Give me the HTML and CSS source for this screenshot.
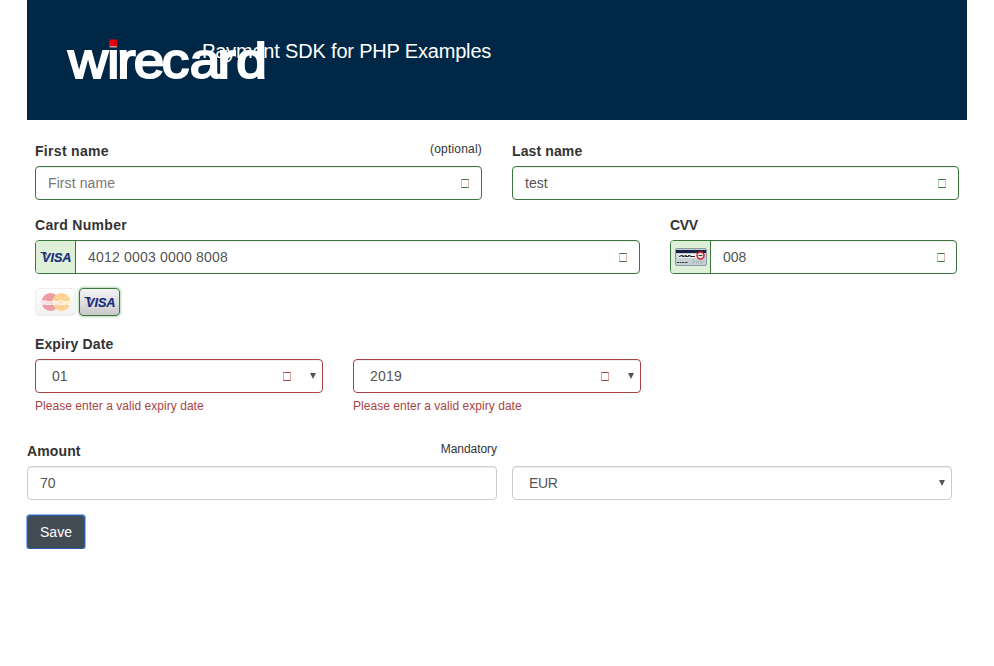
FILE: index.html
```html
<!DOCTYPE html>
<html lang="en">
<head>
<meta charset="utf-8">
<title>Payment SDK for PHP Examples</title>
<link rel="stylesheet" href="styles.css">
</head>
<body>
<main class="container">
  <header class="header">
    <svg class="logo" width="202" height="50" viewBox="0 0 202 50" role="img" aria-label="wirecard">
      <text class="logo-text" transform="scale(1.1 1)" x="2 37.400 46.500 61.500 87 112.500 137.700 154.800" y="42.300">wirecard</text>
      <rect x="43.500" y="3.500" width="8" height="7" fill="#e2000b"/>
    </svg>
    <span class="title">Payment SDK for PHP Examples</span>
  </header>
  <form class="form">
    <div class="payment">
      <div class="row names">
        <div class="group">
          <div class="label-row"><label>First name</label><small class="optional">(optional)</small></div>
          <div class="control valid"><span class="value placeholder">First name</span><i class="mark"></i></div>
        </div>
        <div class="group">
          <div class="label-row"><label class="tight">Last name</label></div>
          <div class="control valid"><span class="value">test</span><i class="mark"></i></div>
        </div>
      </div>
      <div class="row card">
        <div class="group number">
          <div class="label-row"><label>Card Number</label></div>
          <div class="control valid">
            <span class="addon"><svg class="icon" width="32" height="20" viewBox="0 0 32 20"><path d="M0 5h6l2 5-2-3-5-1z" fill="#1b2f70"/><text class="visa" x="2" y="14.500" textLength="29.500" lengthAdjust="spacingAndGlyphs">VISA</text></svg></span>
            <span class="value card-value">4012 0003 0000 8008</span><i class="mark"></i>
          </div>
        </div>
        <div class="group cvv">
          <div class="label-row"><label class="cvv-label">CVV</label></div>
          <div class="control valid">
            <span class="addon"><svg width="32" height="18" viewBox="0 0 32 18"><rect x=".5" y=".5" width="31" height="17" rx="1.500" fill="#c6d0d7" stroke="#8999a5"/><path d="M1 2h30v3H1z" fill="#17203f"/><path d="M3 6h20v4H3z" fill="#f4f4f4"/><path d="M4 8.500l3-1 1 1 3-1v1h2l1-1 2 1h4" fill="none" stroke="#222" stroke-width="1.200"/><path d="M2 14.500h11" stroke="#333" stroke-width="1.200" stroke-dasharray="2 .6"/><path d="M17 14h12" stroke="#b4bec5" stroke-width="3" stroke-dasharray="3 1"/><circle cx="25.500" cy="7.500" r="3.500" fill="#f2e5e5" stroke="#df1820" stroke-width="1.400"/><path d="M23.500 7.500h4" stroke="#444"/></svg></span>
            <span class="value">008</span><i class="mark"></i>
          </div>
        </div>
      </div>
      <div class="brands">
        <span class="brand muted"><svg class="icon" width="32" height="20" viewBox="0 0 32 20"><circle cx="10.500" cy="10" r="9" fill="#dc3e4b"/><circle cx="21.500" cy="10" r="9" fill="#faa927"/><text class="mastercard" x="1.500" y="12.500" textLength="29" lengthAdjust="spacingAndGlyphs">MasterCard</text></svg></span>
        <span class="brand selected"><svg class="icon" width="32" height="20" viewBox="0 0 32 20"><path d="M0 5h6l2 5-2-3-5-1z" fill="#1b2f70"/><text class="visa" x="2" y="14.500" textLength="29.500" lengthAdjust="spacingAndGlyphs">VISA</text></svg></span>
      </div>
      <div class="label-row expiry-label"><label class="tight">Expiry Date</label></div>
      <div class="row expiry">
        <div class="group">
          <div class="control invalid select"><span class="value">01</span><i class="mark"></i><i class="arrow"></i></div>
          <small class="help">Please enter a valid expiry date</small>
        </div>
        <div class="group">
          <div class="control invalid select"><span class="value wide">2019</span><i class="mark"></i><i class="arrow"></i></div>
          <small class="help">Please enter a valid expiry date</small>
        </div>
      </div>
    </div>
    <div class="row amount">
      <div class="group">
        <div class="label-row"><label class="tight">Amount</label><small class="optional mandatory">Mandatory</small></div>
        <div class="control"><span class="value">70</span></div>
      </div>
      <div class="control select currency"><span class="value currency-value">EUR</span><i class="arrow"></i></div>
    </div>
    <button class="save" type="button">Save</button>
  </form>
</main>
</body>
</html>
```
FILE: styles.css
```css
* { box-sizing: border-box; }
body {
  margin: 0;
  background: #fff;
  color: #333;
  font: 14px/20px "Liberation Sans", Arial, sans-serif;
}
.container { width: 940px; margin: 0 auto; }
.header { position: relative; height: 120px; padding: 36px 0 0 39px; background: #002846; }
.logo { display: block; overflow: visible; }
.logo-text {
  font: 50px "Liberation Sans", Arial, sans-serif;
  fill: #fff;
  stroke: #fff;
  stroke-width: 2;
}
.title {
  position: absolute;
  left: 175px;
  top: 36px;
  color: #fff;
  font-size: 20px;
  line-height: 30px;
  letter-spacing: -.18px;
  white-space: nowrap;
}
.payment { padding: 21px 8px 0; }
.row { display: flex; }
.names { gap: 30px; }
.names .group { flex: 1; }
.label-row { display: flex; justify-content: space-between; height: 25px; }
label { font-weight: bold; letter-spacing: .3px; }
.tight { letter-spacing: .12px; }
.cvv-label { letter-spacing: -.3px; }
.optional { font-size: 12px; line-height: 16px; letter-spacing: .2px; }
.mandatory { letter-spacing: -.05px; }
.control {
  display: flex;
  align-items: center;
  height: 34px;
  border: 1px solid #ccc;
  border-radius: 4px;
  box-shadow: inset 0 1px 1px rgba(0, 0, 0, .075);
  color: #555;
  overflow: hidden;
}
.value { flex: 1; padding-left: 12px; }
.card-value, .wide { letter-spacing: .2px; }
.placeholder { color: #777; letter-spacing: .1px; }
.currency-value { letter-spacing: -.4px; }
.select .value { padding-left: 16px; }
.valid { border-color: #3c763d; }
.invalid { border-color: #a94442; }
.mark { width: 8px; height: 9px; margin: 1px 12px 0 0; border: 1px solid; }
.valid .mark { border-color: #3c763d #e3b6b6 #3c763d #b5d3c0; }
.cvv .mark { margin-right: 11px; }
.invalid .mark { margin-right: 19px; border-color: #a94442 #dfa5a0 #a94442 #c7a6c2; }
.arrow {
  width: 0;
  height: 0;
  margin: 0 6px 0 0;
  border: 3.5px solid transparent;
  border-top: 6px solid #555;
  border-bottom: 0;
}
.card { margin-top: 15px; gap: 30px; }
.number { width: 605px; }
.cvv { width: 287px; }
.addon {
  display: flex;
  align-items: center;
  justify-content: center;
  width: 40px;
  height: 32px;
  background: #dff0d8;
  border-right: 1px solid #3c763d;
}
.icon { overflow: visible; }
.visa { font: italic bold 13px "Liberation Sans", Arial, sans-serif; fill: #172e7c; stroke: #172e7c; stroke-width: .2; }
.mastercard { font: italic bold 7px "Liberation Sans", Arial, sans-serif; fill: #fff; stroke: #fff; stroke-width: .2; }
.brands { display: flex; gap: 3px; margin-top: 14px; }
.brand {
  display: flex;
  align-items: center;
  justify-content: center;
  width: 41px;
  height: 28px;
  border: 1px solid #aaa;
  border-radius: 4px;
  background: linear-gradient(#f5f5f5, #c8c8c8);
}
.muted { border-color: #ddd; opacity: .5; background: linear-gradient(#fff, #e5e5e5); }
.selected { border-color: #3c763d; box-shadow: 0 0 3px #67b168; }
.expiry-label { margin-top: 18px; }
.expiry { gap: 30px; }
.expiry .group { width: 288px; }
.help { display: block; margin-top: 5px; color: #a94442; font-size: 12px; line-height: 16px; letter-spacing: .04px; }
.amount { gap: 15px; align-items: flex-end; margin-top: 27px; }
.amount .group { width: 470px; }
.currency { width: 440px; }
.save {
  display: block;
  width: 58px;
  height: 34px;
  margin-top: 15px;
  padding: 0;
  border: 1px solid #2c5b9d;
  border-radius: 3px;
  background: #434b54;
  box-shadow: 0 0 0 1px #8ab6f5;
  color: #fff;
  font: 14px/20px "Liberation Sans", Arial, sans-serif;
}
```
